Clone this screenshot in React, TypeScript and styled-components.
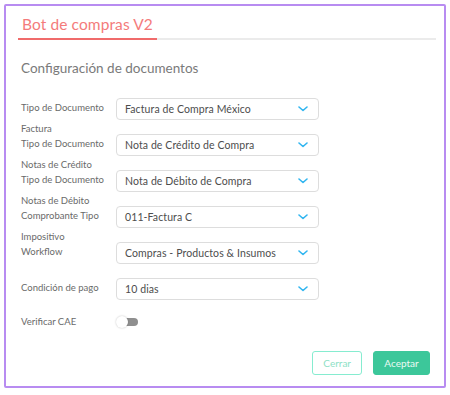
import { useState } from 'react'
import styled, { createGlobalStyle } from 'styled-components'

const GlobalStyle = createGlobalStyle`
  html, body {
    margin: 0;
    padding: 0;
    background: #ffffff;
  }
  body {
    font-family: Lato, "Noto Sans", sans-serif;
  }
`

type Field = {
  label: string
  value: string
}

const fields: Field[] = [
  { label: 'Tipo de Documento Factura', value: 'Factura de Compra México' },
  { label: 'Tipo de Documento Notas de Crédito', value: 'Nota de Crédito de Compra' },
  { label: 'Tipo de Documento Notas de Débito', value: 'Nota de Débito de Compra' },
  { label: 'Comprobante Tipo Impositivo', value: '011-Factura C' },
  { label: 'Workflow', value: 'Compras - Productos & Insumos' },
  { label: 'Condición de pago', value: '10 dias' },
]

function Chevron() {
  return (
    <svg width="10" height="6" viewBox="0 0 10 6" fill="none">
      <path d="M1 1l4 3.5L9 1" stroke="#2fb5f0" strokeWidth="1.6" strokeLinecap="round" strokeLinejoin="round" />
    </svg>
  )
}

export default function App() {
  const [verify, setVerify] = useState(false)

  return (
    <>
      <GlobalStyle />
      <Frame>
        <Tabs>
          <Tab>Bot de compras V2</Tab>
        </Tabs>

        <SectionTitle>Configuración de documentos</SectionTitle>

        <Form>
          {fields.map((field) => (
            <Row key={field.label}>
              <Label>{field.label}</Label>
              <Select>
                <SelectValue>{field.value}</SelectValue>
                <Chevron />
              </Select>
            </Row>
          ))}
          <ToggleRow>
            <Label>Verificar CAE</Label>
            <Toggle type="button" $on={verify} onClick={() => setVerify(!verify)}>
              <Knob $on={verify} />
            </Toggle>
          </ToggleRow>
        </Form>

        <Footer>
          <Button $variant="outline">Cerrar</Button>
          <Button $variant="primary">Aceptar</Button>
        </Footer>
      </Frame>
    </>
  )
}

const Frame = styled.div`
  box-sizing: border-box;
  margin: 4px;
  width: 442px;
  height: 384px;
  border: 2px solid #b88cf1;
  border-radius: 2px;
  padding: 10px 8px 0 12px;
  display: flex;
  flex-direction: column;
`

const Tabs = styled.div`
  display: flex;
  border-bottom: 2px solid #ebebeb;
`

const Tab = styled.div`
  padding: 0 4px 5px 4px;
  margin-bottom: -2px;
  border-bottom: 2px solid #f06b6b;
  color: #f47b7b;
  font-size: 15.5px;
  line-height: 17px;
  letter-spacing: 0.1px;
`

const SectionTitle = styled.h2`
  margin: 20px 0 0 3px;
  font-size: 13.5px;
  font-weight: 400;
  color: #7a7a7a;
  line-height: 16px;
`

const Form = styled.div`
  margin: 22px 0 0 3px;
  display: flex;
  flex-direction: column;
  gap: 14px;
`

const Row = styled.div`
  display: grid;
  grid-template-columns: 95px 203px;
  height: 22px;
  align-items: start;
`

const ToggleRow = styled(Row)`
  margin-top: -3px;
  align-items: center;
`

const Label = styled.div`
  width: 88px;
  margin-top: -1px;
  font-size: 9.5px;
  line-height: 21px;
  color: #6a6a6a;
`

const Select = styled.div`
  box-sizing: border-box;
  height: 22px;
  border: 1px solid #dddddd;
  border-radius: 4px;
  padding: 0 10px 0 8px;
  display: flex;
  align-items: center;
  justify-content: space-between;
  background: #ffffff;
`

const SelectValue = styled.span`
  font-size: 10.5px;
  color: #4d4d4d;
  letter-spacing: 0.1px;
`

const Toggle = styled.button<{ $on: boolean }>`
  position: relative;
  width: 22px;
  height: 12px;
  padding: 0;
  border: none;
  background: transparent;
  cursor: pointer;

  &::before {
    content: '';
    position: absolute;
    left: 3px;
    right: 0;
    top: 2px;
    height: 8px;
    border-radius: 4px;
    background: ${({ $on }) => ($on ? '#3cc79a' : '#8f8f8f')};
  }
`

const Knob = styled.span<{ $on: boolean }>`
  position: absolute;
  top: 0;
  left: ${({ $on }) => ($on ? '10px' : '0')};
  width: 12px;
  height: 12px;
  border-radius: 50%;
  background: #ffffff;
  box-shadow: 0 0 2px rgba(0, 0, 0, 0.25);
`

const Footer = styled.div`
  margin-top: auto;
  margin-bottom: 11px;
  margin-right: 6px;
  display: flex;
  justify-content: flex-end;
  gap: 11px;
`

const Button = styled.button<{ $variant: 'outline' | 'primary' }>`
  box-sizing: border-box;
  height: 24px;
  padding: 0 10px;
  border-radius: 3px;
  font-family: Lato, "Noto Sans", sans-serif;
  font-size: 10px;
  cursor: pointer;
  border: 1px solid ${({ $variant }) => ($variant === 'primary' ? '#3cc79a' : '#86ecd0')};
  background: ${({ $variant }) => ($variant === 'primary' ? '#3cc79a' : '#ffffff')};
  color: ${({ $variant }) => ($variant === 'primary' ? '#eafaf4' : '#8edfc6')};
  min-width: ${({ $variant }) => ($variant === 'primary' ? '57px' : '48px')};
`
